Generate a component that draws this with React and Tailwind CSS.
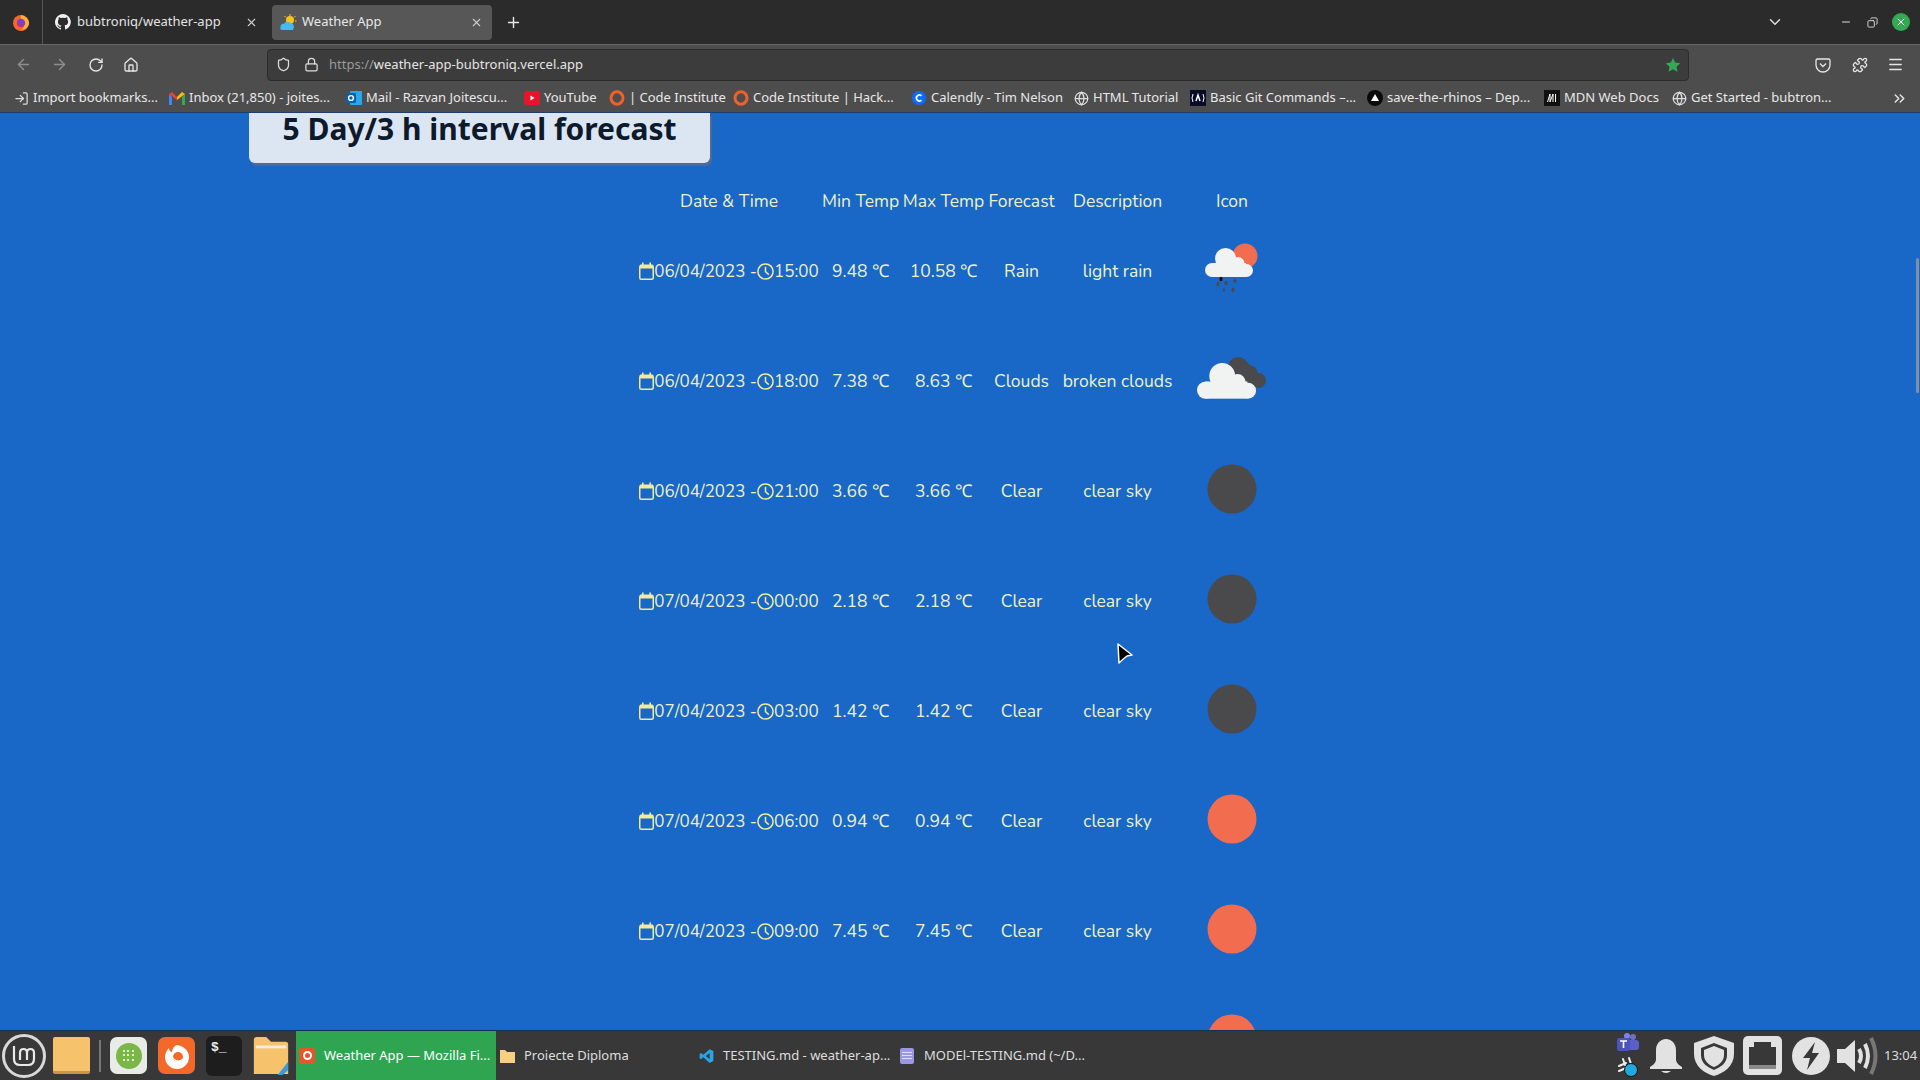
import { ArrowLeft, ArrowRight, RotateCw, Home, Shield, Lock, X, Plus, ChevronDown, Minus, Copy, Menu, Puzzle, ChevronsRight, Globe, LogIn } from "lucide-react"

const uiFont = "font-['Noto_Sans','Liberation_Sans',sans-serif]"

const bookmarks = [
  { label: "Import bookmarks...", w: "w-[156px]", icon: <LogIn size={15} className="text-[#ddd]" /> },
  { label: "Inbox (21,850) - joites...", w: "w-[177px]", icon: <GmailIcon /> },
  { label: "Mail - Razvan Joitescu...", w: "w-[178px]", icon: <OutlookIcon /> },
  { label: "YouTube", w: "w-[85px]", icon: <YoutubeIcon /> },
  { label: "| Code Institute", w: "w-[124px]", icon: <RingIcon /> },
  { label: "Code Institute | Hack...", w: "w-[178px]", icon: <RingIcon /> },
  { label: "Calendly - Tim Nelson", w: "w-[162px]", icon: <CalendlyIcon /> },
  { label: "HTML Tutorial", w: "w-[117px]", icon: <Globe size={15} className="text-[#ddd]" /> },
  { label: "Basic Git Commands –...", w: "w-[177px]", icon: <BasicIcon /> },
  { label: "save-the-rhinos – Dep...", w: "w-[177px]", icon: <VercelIcon /> },
  { label: "MDN Web Docs", w: "w-[127px]", icon: <MdnIcon /> },
  { label: "Get Started - bubtron...", w: "w-[200px]", icon: <Globe size={15} className="text-[#ddd]" /> },
]

const rows = [
  { date: "06/04/2023", time: "15:00", min: "9.48 ℃", max: "10.58 ℃", main: "Rain", desc: "light rain", icon: "rain" },
  { date: "06/04/2023", time: "18:00", min: "7.38 ℃", max: "8.63 ℃", main: "Clouds", desc: "broken clouds", icon: "clouds" },
  { date: "06/04/2023", time: "21:00", min: "3.66 ℃", max: "3.66 ℃", main: "Clear", desc: "clear sky", icon: "moon" },
  { date: "07/04/2023", time: "00:00", min: "2.18 ℃", max: "2.18 ℃", main: "Clear", desc: "clear sky", icon: "moon" },
  { date: "07/04/2023", time: "03:00", min: "1.42 ℃", max: "1.42 ℃", main: "Clear", desc: "clear sky", icon: "moon" },
  { date: "07/04/2023", time: "06:00", min: "0.94 ℃", max: "0.94 ℃", main: "Clear", desc: "clear sky", icon: "sun" },
  { date: "07/04/2023", time: "09:00", min: "7.45 ℃", max: "7.45 ℃", main: "Clear", desc: "clear sky", icon: "sun" },
]

function GmailIcon() {
  return (
    <svg width="16" height="13" viewBox="0 0 16 13">
      <path d="M0 2 V13 H3 V5 Z" fill="#4285f4" />
      <path d="M16 2 V13 H13 V5 Z" fill="#34a853" />
      <path d="M0 2 L3 0 L8 5 L8 8 Z" fill="#ea4335" />
      <path d="M16 2 L13 0 L8 5 L8 8 Z" fill="#fbbc04" />
    </svg>
  )
}

function OutlookIcon() {
  return (
    <svg width="16" height="16" viewBox="0 0 16 16">
      <rect x="4" y="1" width="12" height="14" rx="1" fill="#28a8ea" />
      <rect x="0" y="3" width="10" height="10" rx="1" fill="#0f5fa8" />
      <circle cx="5" cy="8" r="2.4" fill="none" stroke="#fff" strokeWidth="1.4" />
    </svg>
  )
}

function YoutubeIcon() {
  return (
    <svg width="16" height="14" viewBox="0 0 16 14">
      <rect width="16" height="14" rx="3" fill="#e8142a" />
      <path d="M6.5 4.5 L10.5 7 L6.5 9.5 Z" fill="#fff" />
    </svg>
  )
}

function RingIcon() {
  return (
    <svg width="16" height="16" viewBox="0 0 16 16">
      <ellipse cx="8" cy="8" rx="6" ry="6.2" fill="none" stroke="#f0602a" strokeWidth="3" />
    </svg>
  )
}

function CalendlyIcon() {
  return (
    <svg width="16" height="16" viewBox="0 0 16 16">
      <circle cx="8" cy="8" r="7" fill="#0a6cff" />
      <path d="M10.5 5.8 A3 3 0 1 0 10.5 10.2" fill="none" stroke="#fff" strokeWidth="1.6" />
    </svg>
  )
}

function BasicIcon() {
  return (
    <svg width="16" height="16" viewBox="0 0 16 16">
      <rect width="16" height="16" fill="#0b0b28" />
      <path d="M6 11 L8 5 L10 11" fill="none" stroke="#fff" strokeWidth="1.5" />
      <path d="M3 4 Q1 8 3 12 M13 4 Q15 8 13 12" fill="none" stroke="#fff" strokeWidth="1" />
    </svg>
  )
}

function VercelIcon() {
  return (
    <svg width="16" height="16" viewBox="0 0 16 16">
      <circle cx="8" cy="8" r="8" fill="#0a0a0a" />
      <path d="M8 4 L12 11 H4 Z" fill="#fff" />
    </svg>
  )
}

function MdnIcon() {
  return (
    <svg width="16" height="16" viewBox="0 0 16 16">
      <rect width="16" height="16" fill="#111" />
      <path d="M3.5 12 L6 4 V12 L9 4 V12 M11.5 4 V12" fill="none" stroke="#fff" strokeWidth="1" />
    </svg>
  )
}

function FirefoxIcon({ size = 18 }) {
  return (
    <svg width={size} height={size} viewBox="0 0 18 18">
      <circle cx="9" cy="10" r="8" fill="#f2692a" />
      <path d="M9 2 C13 3 17 6 17 10 C17 14 13 17 9 17 C12 15 13 12 11 9 C10 7 8 6 9 2 Z" fill="#ffb02e" />
      <circle cx="9" cy="10" r="4.2" fill="#7b3fd0" />
      <path d="M5 9 C6 12 10 13 13 11 C12 14 7 15 5 12 Z" fill="#e4264e" />
    </svg>
  )
}

function WeatherFavicon() {
  return (
    <svg width="17" height="17" viewBox="0 0 17 17">
      <circle cx="10" cy="6" r="4" fill="#f6c21c" />
      <path d="M10 0 V2 M15.5 2 L14 3.5 M4.5 2 L6 3.5 M16.5 7 H15" stroke="#f6c21c" strokeWidth="1" />
      <path d="M1 16 C-1 12 2 9 4 10 C5 7 10 7 11 10 C13 9 15 12 13 16 Z" fill="#49b8f0" />
    </svg>
  )
}

function CloudShape({ fill, scale = 1, x = 0, y = 0 }) {
  // same outline for every cloud, 48x29 at scale 1
  return (
    <g transform={`translate(${x} ${y}) scale(${scale})`} fill={fill}>
      <circle cx="7" cy="22" r="7" />
      <circle cx="20.500" cy="10.500" r="10.500" />
      <circle cx="33" cy="15.500" r="6.500" />
      <circle cx="41.500" cy="22.500" r="6.500" />
      <rect x="7" y="15" width="34" height="14" />
    </g>
  )
}

function WeatherIcon({ type }) {
  if (type === "moon" || type === "sun") {
    return (
      <svg width="100" height="100" viewBox="0 0 100 100">
        <circle cx="50" cy="50" r="24.5" fill={type === "moon" ? "#4a4a4c" : "#f26c4f"} />
      </svg>
    )
  }
  if (type === "rain") {
    return (
      <svg width="100" height="100" viewBox="0 0 100 100">
        <circle cx="63" cy="37" r="12.5" fill="#f26c4f" />
        <CloudShape fill="#f1f2f2" x={23} y={29} />
        <g fill="#4a4a4c">
          <ellipse cx="39" cy="60" rx="1.6" ry="2.2" fill="#111" />
          <ellipse cx="36" cy="65" rx="1.6" ry="2.6" />
          <ellipse cx="44" cy="64" rx="1.6" ry="2.2" />
          <ellipse cx="53" cy="62" rx="1.6" ry="2" />
          <ellipse cx="42" cy="71" rx="1.2" ry="1.8" />
          <ellipse cx="51" cy="71" rx="1.6" ry="2.4" />
        </g>
      </svg>
    )
  }
  return (
    <svg width="100" height="100" viewBox="0 0 100 100">
      <g fill="#4a4a4c">
        <circle cx="56" cy="38" r="10" />
        <circle cx="68" cy="44" r="7.500" />
        <circle cx="76.500" cy="51.500" r="7.500" />
        <path d="M50 48 L62 30 L76 44 L70 59 L56 59 Z" />
      </g>
      <CloudShape fill="#f1f2f2" x={15} y={34} scale={1.23} />
    </svg>
  )
}

function CalendarIcon() {
  return (
    <svg width="15" height="18" viewBox="0 0 15 18" className="shrink-0">
      <rect x="0.75" y="3.75" width="13.5" height="13.5" rx="1.5" fill="none" stroke="#f3ea9b" strokeWidth="1.5" />
      <rect x="0.75" y="2.5" width="13.5" height="4" rx="1" fill="#f3ea9b" />
      <path d="M3.8 0.5 V3 M11.2 0.5 V3" stroke="#f3ea9b" strokeWidth="1.6" />
    </svg>
  )
}

function ClockIcon() {
  return (
    <svg width="17" height="17" viewBox="0 0 17 17" className="shrink-0">
      <circle cx="8.5" cy="8.5" r="7.6" fill="none" stroke="#f3ea9b" strokeWidth="1.5" />
      <path d="M8.5 3.8 V8.7 L11.8 11.6" fill="none" stroke="#f3ea9b" strokeWidth="1.5" />
    </svg>
  )
}

function TabBar() {
  return (
    <div className="h-[44px] bg-[#2b2b2b] flex items-center relative">
      <div className="w-[43px] h-full flex items-center justify-center border-r border-[#555]">
        <FirefoxIcon />
      </div>
      <div className="w-[229px] flex items-center pl-[12px] text-[13px] text-[#e3e3e3]">
        <svg width="16" height="16" viewBox="0 0 16 16" fill="#f0f0f0" className="mr-[6px]">
          <path d="M8 0a8 8 0 0 0-2.5 15.6c.4.1.5-.2.5-.4v-1.4c-2.2.5-2.7-1-2.7-1-.4-.9-.9-1.200-.9-1.200-.7-.5.100-.5.100-.5.8.1 1.200.8 1.200.8.7 1.200 1.900.9 2.300.7.100-.5.300-.9.500-1.100-1.800-.2-3.600-.9-3.600-4 0-.9.300-1.600.8-2.100-.1-.2-.4-1 .1-2.100 0 0 .7-.2 2.200.8a7.600 7.600 0 0 1 4 0c1.500-1 2.200-.8 2.200-.8.400 1.100.200 1.900.100 2.100.5.600.8 1.300.8 2.100 0 3.100-1.900 3.700-3.600 3.900.3.200.5.700.5 1.500v2.200c0 .2.100.5.600.4A8 8 0 0 0 8 0Z" />
        </svg>
        <span className="w-[168px]">bubtroniq/weather-app</span>
        <X size={13} className="text-[#ccc]" />
      </div>
      <div className="w-[220px] h-[35px] bg-[#575757] rounded-[4px] flex items-center pl-[8px] text-[13px] text-[#e8e8e8]">
        <WeatherFavicon />
        <span className="ml-[5px] w-[168px]">Weather App</span>
        <X size={13} className="text-[#ccc]" />
      </div>
      <Plus size={17} className="ml-[13px] text-[#e8e8e8]" />
      <div className="ml-auto flex items-center text-[#ddd]">
        <ChevronDown size={18} />
        <Minus size={12} className="ml-[56px]" />
        <Copy size={11} className="ml-[15px] -scale-x-100" />
        <div className="ml-[14px] mr-[10px] w-[18px] h-[18px] rounded-full bg-[#35a853] flex items-center justify-center">
          <X size={12} className="text-white" />
        </div>
      </div>
    </div>
  )
}

function NavBar() {
  return (
    <div className="h-[40px] bg-[#4d4d4d] border-t border-[#666] flex items-center text-[#e6e6e6]">
      <ArrowLeft size={17} className="ml-[15px] shrink-0 text-[#8e8e8e]" />
      <ArrowRight size={17} className="ml-[19px] shrink-0 text-[#8e8e8e]" />
      <RotateCw size={16} className="ml-[20px] shrink-0" />
      <Home size={16} className="ml-[19px] shrink-0" />
      <div className="ml-[128px] w-[1422px] shrink-0 h-[32px] bg-[#3c3c3c] border border-[#2c2c2c] rounded-[4px] flex items-center pl-[8px]">
        <Shield size={15} className="text-[#ddd]" />
        <Lock size={15} className="ml-[13px] text-[#ddd]" />
        <span className="ml-[10px] text-[13px] text-[#9a9a9a]">
          https://<span className="text-[#e4e4e4]">weather-app-bubtroniq.vercel.app</span>
        </span>
        <svg width="16" height="16" viewBox="0 0 24 24" fill="#34a853" className="ml-auto mr-[7px]">
          <path d="M12 1.5 15.300 8.400 22.800 9.400 17.300 14.600 18.700 22.100 12 18.500 5.300 22.100 6.700 14.600 1.200 9.400 8.700 8.400Z" />
        </svg>
      </div>
      <svg width="16" height="16" viewBox="0 0 16 16" fill="none" stroke="#e6e6e6" strokeWidth="1.3" className="ml-[126px] shrink-0">
        <path d="M2.500 2h11A1.500 1.500 0 0 1 15 3.500V8a7 7 0 0 1-14 0V3.500A1.500 1.500 0 0 1 2.500 2Z" />
        <path d="M5 6.500 8 9.500 11 6.500" />
      </svg>
      <Puzzle size={16} className="ml-[21px] shrink-0" />
      <Menu size={17} className="ml-[19px] shrink-0" />
    </div>
  )
}

function BookmarkBar() {
  return (
    <div className="h-[29px] bg-[#4d4d4d] flex items-center pl-[13px] text-[13px] text-[#e8e8e8] border-b border-[#1d3f6e]">
      {bookmarks.map(b => (
        <div key={b.label} className={"flex items-center gap-[4px] whitespace-nowrap " + b.w}>
          <span className="w-[16px] flex justify-center shrink-0">{b.icon}</span>
          <span>{b.label}</span>
        </div>
      ))}
      <ChevronsRight size={17} className="ml-[20px]" />
    </div>
  )
}

function ForecastTable() {
  const th = "font-normal h-[25px] p-0 pb-[2px] text-center whitespace-nowrap"
  const td = "p-0 text-center h-[110px] whitespace-nowrap"
  return (
    <table className={"ml-[636px] mt-[25px] table-fixed border-collapse w-[648px] text-[17.5px] text-[#edf1c9] font-['Nunito','Lato',sans-serif]"}>
      <thead>
        <tr>
          <th className={th + " w-[186px]"}>Date &amp; Time</th>
          <th className={th + " w-[77px]"}>Min Temp</th>
          <th className={th + " w-[89px]"}>Max Temp</th>
          <th className={th + " w-[67px]"}>Forecast</th>
          <th className={th + " w-[125px]"}>Description</th>
          <th className={th + " w-[104px]"}>Icon</th>
        </tr>
      </thead>
      <tbody>
        {rows.map(r => (
          <tr key={r.date + r.time}>
            <td className={td}>
              <div className="flex items-center justify-center text-[17px]">
                <CalendarIcon />
                <span>{r.date} -</span>
                <ClockIcon />
                <span>{r.time}</span>
              </div>
            </td>
            <td className={td}>{r.min}</td>
            <td className={td}>{r.max}</td>
            <td className={td}>{r.main}</td>
            <td className={td}>{r.desc}</td>
            <td className={td}>
              <div className="flex justify-center -translate-y-[2px]">
                <WeatherIcon type={r.icon} />
              </div>
            </td>
          </tr>
        ))}
        {/* next row is cut by the taskbar, only the top of its icon shows */}
        <tr>
          <td className={td} colSpan={5} />
          <td className={td}>
            <div className="flex justify-center -translate-y-[2px]">
              <WeatherIcon type="sun" />
            </div>
          </td>
        </tr>
      </tbody>
    </table>
  )
}

function Page() {
  return (
    <div className="relative h-[917px] bg-[#1967c6] overflow-hidden">
      <div className="ml-[249px] w-[461px] h-[50px] bg-[#dce6f3] rounded-b-[6px] shadow-[2px_3px_1px_#4d6b96] pb-[18px] flex items-center justify-center">
        <h1 className="text-[30px] leading-[32px] font-bold text-[#0c1a2c] font-['Noto_Sans',sans-serif]">5 Day/3 h interval forecast</h1>
      </div>
      <ForecastTable />
      <div className="absolute right-[1px] top-[145px] w-[3px] h-[135px] rounded-full bg-[#7f90a6]" />
      <svg width="18" height="24" viewBox="0 0 18 24" className="absolute left-[1116px] top-[529px]">
        <path d="M2 2 L16 13 L11 14 Q7 17 3 21 Z" fill="#000" stroke="#fff" strokeWidth="1.500" strokeLinejoin="round" />
      </svg>
    </div>
  )
}

function TaskButton({ icon, label, w, active }) {
  return (
    <div className={"h-full flex items-center text-[13px] " + w + (active ? " bg-[#2fa551] text-white" : " text-[#dedede]")}>
      <span className="w-[22px] flex justify-center shrink-0">{icon}</span>
      <span className="ml-[6px] whitespace-nowrap">{label}</span>
    </div>
  )
}

function Taskbar() {
  return (
    <div className="h-[50px] bg-[#383838] border-t border-[#14304f] flex items-center">
      <div className="ml-[2px] w-[44px] h-[44px] rounded-full border-[3px] border-[#d8d8d8] flex items-center justify-center">
        <svg width="26" height="24" viewBox="0 0 26 24" fill="none" stroke="#e8e8e8" strokeWidth="2.200">
          <path d="M3 2 V15 Q3 21 9 21 H17 Q23 21 23 15 V9 Q23 5 19.500 5 Q16 5 16 9 V16 M16 9 Q16 5 12.500 5 Q9 5 9 9 V16" />
        </svg>
      </div>
      <div className="ml-[7px] w-[37px] h-[37px] bg-[#f6c26b] rounded-[2px] border-b-[3px] border-[#c8964a]" />
      <div className="ml-[9px] w-[2px] h-[32px] bg-[#777]" />
      <div className="ml-[9px] w-[37px] h-[37px] bg-[#e8ebe6] rounded-[7px] flex items-center justify-center">
        <div className="w-[26px] h-[26px] rounded-full bg-[#7ab648] grid grid-cols-3 place-items-center p-[6px]">
          {[1, 2, 3, 4, 5, 6, 7, 8, 9].map(i => (
            <div key={i} className="w-[2px] h-[2px] bg-[#dff0cf]" />
          ))}
        </div>
      </div>
      <div className="ml-[11px] w-[37px] h-[37px] bg-[#f2692a] rounded-[7px] flex items-center justify-center">
        <svg width="26" height="26" viewBox="0 0 26 26">
          <path d="M13 2 C20 3 25 8 25 14 A12 12 0 0 1 1 14 C1 10 3 7 5 5 C5 8 7 9 8 9 C8 6 10 3 13 2 Z" fill="#fff" />
          <circle cx="14" cy="14" r="5" fill="#f2692a" />
          <path d="M8 12 C10 19 18 19 20 13 L22 16 C18 22 10 21 8 12 Z" fill="#fff" />
        </svg>
      </div>
      <div className="ml-[11px] w-[36px] h-[40px] bg-[#1d1d1d] rounded-[6px] pl-[5px] pt-[2px] text-[13px] font-bold leading-[20px] text-[#eee] font-['Liberation_Mono',monospace]">
        $_
      </div>
      <svg width="38" height="40" viewBox="0 0 38 42" className="ml-[10px]">
        <path d="M1 4 Q1 1 4 1 H14 L19 6 H34 Q37 6 37 9 V40 H1 Z" fill="#f6c26b" />
        <rect x="3" y="10" width="32" height="3" fill="#f3ede0" />
        <path d="M37 27 V36 L31 41 H26 Z" fill="#3c9ad6" />
      </svg>
      <div className="ml-[6px] h-full flex">
        <TaskButton
          active
          w="w-[200px]"
          label="Weather App — Mozilla Fi..."
          icon={
            <div className="w-[16px] h-[16px] bg-[#e8552a] rounded-[3px] flex items-center justify-center">
              <div className="w-[9px] h-[9px] rounded-full border-[2px] border-white" />
            </div>
          }
        />
        <TaskButton
          w="w-[199px]"
          label="Proiecte Diploma"
          icon={
            <svg width="15" height="14" viewBox="0 0 15 14">
              <path d="M0 1 H5 L7 3 H15 V14 H0 Z" fill="#f6cf85" />
            </svg>
          }
        />
        <TaskButton
          w="w-[201px]"
          label="TESTING.md - weather-ap..."
          icon={
            <svg width="15" height="16" viewBox="0 0 24 24">
              <path d="M17 1 L23 4 V20 L17 23 L7 14 L3 17 L1 15 V9 L3 7 L7 10 Z M17 7 L11 12 L17 17 Z" fill="#2aa4e8" fillRule="evenodd" />
            </svg>
          }
        />
        <TaskButton
          w="w-[200px]"
          label="MODEl-TESTING.md (~/D..."
          icon={
            <div className="w-[14px] h-[16px] bg-[#9b97e0] rounded-[2px] flex flex-col justify-center gap-[2px] px-[2px]">
              <div className="h-[1px] bg-[#e2e0f8]" />
              <div className="h-[1px] bg-[#e2e0f8]" />
              <div className="h-[1px] bg-[#e2e0f8]" />
            </div>
          }
        />
      </div>
      <div className="ml-auto flex items-center">
        <div className="flex flex-col items-center gap-[3px]">
          <svg width="24" height="20" viewBox="0 0 24 20">
            <circle cx="17" cy="4" r="3" fill="#6f6fc8" />
            <circle cx="11" cy="3" r="3" fill="#7b83eb" />
            <rect x="12" y="7" width="11" height="10" rx="3" fill="#5b5fc7" />
            <rect x="1" y="5" width="13" height="13" rx="2" fill="#4b53bc" />
            <path d="M4 8 H11 M7.500 8 V15" stroke="#fff" strokeWidth="1.600" />
          </svg>
          <svg width="22" height="22" viewBox="0 0 22 22">
            <path d="M2 10 L9 7 M2 15 L9 12 M6 3 L8 9 M12 2 L14 8" stroke="#eee" strokeWidth="2" strokeLinecap="round" />
            <circle cx="14" cy="14" r="6.500" fill="#22a8e0" stroke="#111" strokeWidth="1" />
          </svg>
        </div>
        <svg width="36" height="38" viewBox="0 0 36 38" className="ml-[8px]">
          <path d="M18 2 C12 2 8 7 8 13 V22 C8 26 5 28 2 30 V32 H34 V30 C31 28 28 26 28 22 V13 C28 7 24 2 18 2 Z M13 34 H23 Q18 38 13 34 Z" fill="#e2e2e2" />
        </svg>
        <svg width="44" height="44" viewBox="0 0 44 44" className="ml-[8px]">
          <path d="M22 2 L42 9 V20 C42 32 32 39 22 42 C12 39 2 32 2 20 V9 Z" fill="#e2e2e2" />
          <path d="M22 9 L35 14 V21 C35 29 29 33 22 36 C15 33 9 29 9 21 V14 Z" fill="#383838" />
          <path d="M22 12 L32 16 V21 C32 27 27 31 22 33 C17 31 12 27 12 21 V16 Z" fill="#e2e2e2" />
        </svg>
        <div className="ml-[7px] w-[39px] h-[39px] rounded-[5px] bg-[#e2e2e2] flex items-center justify-center">
          <svg width="29" height="29" viewBox="0 0 29 29">
            <path d="M6 1 H23 V6 H28 V28 H1 V6 H6 Z" fill="#383838" />
            <rect x="1" y="24" width="27" height="4" fill="#8a8a8a" />
          </svg>
        </div>
        <div className="ml-[10px] w-[38px] h-[38px] rounded-full bg-[#e2e2e2] flex items-center justify-center">
          <svg width="18" height="30" viewBox="0 0 18 30">
            <path d="M13 1 L1 17 H8 L5 29 L17 12 H10 Z" fill="#383838" />
          </svg>
        </div>
        <svg width="42" height="40" viewBox="0 0 42 40" className="ml-[6px]">
          <path d="M1 13 H9 L19 4 V36 L9 27 H1 Z" fill="#e2e2e2" />
          <path d="M23 13 Q27 20 23 27" fill="none" stroke="#e2e2e2" strokeWidth="4" />
          <path d="M29 8 Q35 20 29 32" fill="none" stroke="#e2e2e2" strokeWidth="4" />
          <path d="M35 2 Q44 20 35 38" fill="none" stroke="#777" strokeWidth="4" />
        </svg>
        <span className="ml-[6px] w-[36px] text-[13px] text-[#dedede] font-['Noto_Sans',sans-serif]">13:04</span>
      </div>
    </div>
  )
}

export default function App() {
  return (
    <div className={"w-[1920px] h-[1080px] overflow-hidden flex flex-col " + uiFont}>
      <TabBar />
      <NavBar />
      <BookmarkBar />
      <Page />
      <Taskbar />
    </div>
  )
}
